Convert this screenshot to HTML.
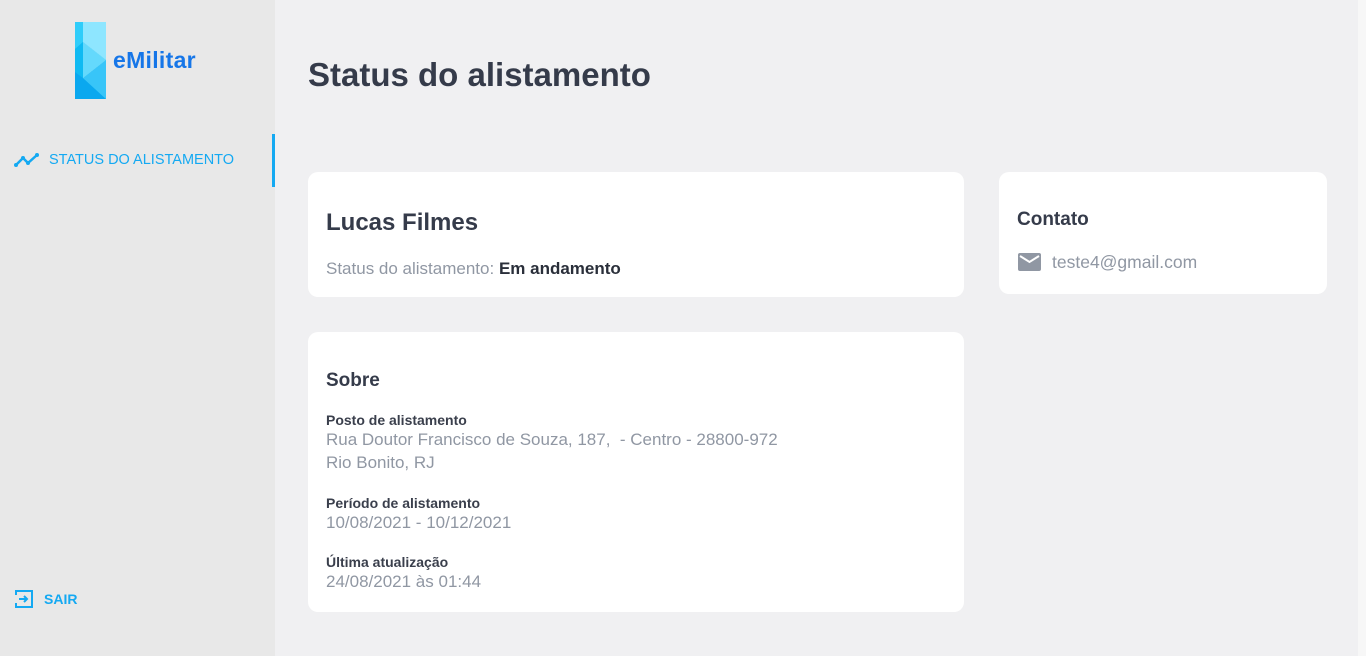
<!DOCTYPE html>
<html><head><meta charset="utf-8"><style>
*{margin:0;padding:0;box-sizing:border-box}
body{width:1366px;height:656px;overflow:hidden;background:#f0f0f2;font-family:"Liberation Sans",Roboto,sans-serif;position:relative}
.side{position:absolute;left:0;top:0;width:275px;height:656px;background:#e8e8e8}
.card{position:absolute;background:#fff;border-radius:10px}
.lbl{font-size:14px;font-weight:bold;color:#3a3f4c}
.val{font-size:17px;color:#9097a3;line-height:23px}
</style></head><body>
<div class="side">
<svg style="position:absolute;left:75px;top:22px" width="31" height="77" viewBox="0 0 31 77">
<polygon points="0,0 31,0 31,38 8,20 8,56 31,38 31,77 0,77" fill="#1ec3f5"/>
<polygon points="8,0 31,0 31,38 8,20" fill="#8ee6ff"/>
<polygon points="0,0 8,0 8,20 0,27" fill="#2fcdfa"/>
<polygon points="8,20 31,38 8,56" fill="#64d9fc"/>
<polygon points="0,27 8,20 8,56 0,50" fill="#0fbaf2"/>
<polygon points="0,50 8,56 31,77 0,77" fill="#0aa8ef"/>
<polygon points="8,56 31,38 31,77" fill="#38c5f8"/>
</svg>
<div style="position:absolute;left:113px;top:47px;font-size:23px;font-weight:bold;color:#1676e8;letter-spacing:0.3px">eMilitar</div>
<svg style="position:absolute;left:14px;top:153px" width="26" height="14" viewBox="0 0 26 14"><polyline points="2,12 9,5 14,10 23,2" fill="none" stroke="#14a9f2" stroke-width="2.5"/><circle cx="2" cy="12" r="2" fill="#14a9f2"/><circle cx="9" cy="5" r="2" fill="#14a9f2"/><circle cx="14" cy="10" r="2" fill="#14a9f2"/><circle cx="23" cy="2" r="2" fill="#14a9f2"/></svg>
<div style="position:absolute;left:49px;top:152px;font-size:14.5px;color:#14a9f2">STATUS DO ALISTAMENTO</div>
<div style="position:absolute;left:272px;top:134px;width:3px;height:53px;background:#14a9f2"></div>
<svg style="position:absolute;left:15px;top:590px" width="18" height="18" viewBox="0 0 18 18"><path d="M1 5V1H17V17H1V13" fill="none" stroke="#14a9f2" stroke-width="2"/><path d="M4 9H12M9 6l3 3-3 3" fill="none" stroke="#14a9f2" stroke-width="2"/></svg>
<div style="position:absolute;left:44px;top:591px;font-size:14px;color:#14a9f2;font-weight:bold">SAIR</div>
</div>
<div style="position:absolute;right:0;top:0;width:8px;height:656px;background:#f7f7f7"></div>
<div style="position:absolute;left:308px;top:56px;font-size:33px;font-weight:bold;color:#353b4a">Status do alistamento</div>
<div class="card" style="left:308px;top:172px;width:656px;height:125px">
<div style="position:absolute;left:18px;top:37px;font-size:24px;font-weight:bold;color:#353b4a">Lucas Filmes</div>
<div style="position:absolute;left:18px;top:87px;font-size:17px;color:#9097a3">Status do alistamento: <b style="color:#2a2f3a">Em andamento</b></div>
</div>
<div class="card" style="left:999px;top:172px;width:328px;height:122px">
<div style="position:absolute;left:18px;top:37px;font-size:19px;font-weight:bold;color:#353b4a">Contato</div>
<svg style="position:absolute;left:19px;top:81px" width="23" height="18" viewBox="0 0 23 18"><rect x="0" y="0" width="23" height="18" rx="2" fill="#9097a3"/><path d="M2 3l9.5 6L21 3" fill="none" stroke="#fff" stroke-width="2"/></svg>
<div style="position:absolute;left:53px;top:80px;font-size:17.5px;color:#9097a3">teste4@gmail.com</div>
</div>
<div class="card" style="left:308px;top:332px;width:656px;height:280px">
<div style="position:absolute;left:18px;top:38px;font-size:19px;font-weight:bold;color:#353b4a">Sobre</div>
<div style="position:absolute;left:18px;top:80px">
<div class="lbl">Posto de alistamento</div>
<div class="val">Rua Doutor Francisco de Souza, 187,&nbsp; - Centro - 28800-972<br>Rio Bonito, RJ</div>
</div>
<div style="position:absolute;left:18px;top:163px"><div class="lbl">Período de alistamento</div><div class="val">10/08/2021 - 10/12/2021</div></div>
<div style="position:absolute;left:18px;top:222px"><div class="lbl">Última atualização</div><div class="val">24/08/2021 às 01:44</div></div>
</div>
</body></html>
